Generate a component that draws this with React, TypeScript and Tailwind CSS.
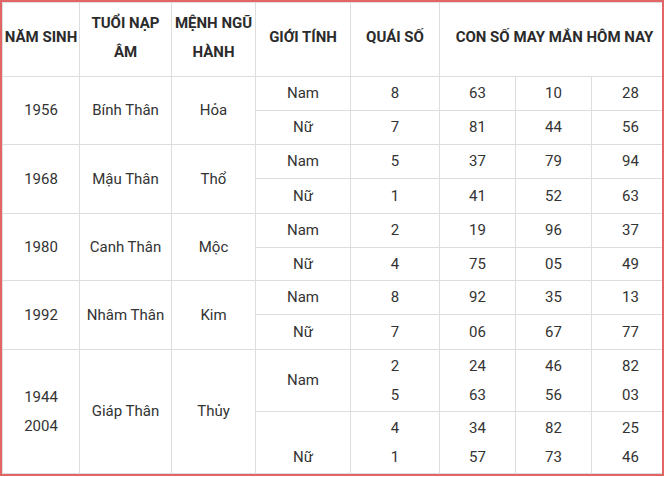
import React from "react";

type Group = {
  years: string[];
  tuoi: string;
  menh: string;
  rows: { gt: string[]; qs: string[]; nums: string[][] }[];
};

const groups: Group[] = [
  { years: ["1956"], tuoi: "Bính Thân", menh: "Hỏa", rows: [
    { gt: ["Nam"], qs: ["8"], nums: [["63"], ["10"], ["28"]] },
    { gt: ["Nữ"], qs: ["7"], nums: [["81"], ["44"], ["56"]] },
  ] },
  { years: ["1968"], tuoi: "Mậu Thân", menh: "Thổ", rows: [
    { gt: ["Nam"], qs: ["5"], nums: [["37"], ["79"], ["94"]] },
    { gt: ["Nữ"], qs: ["1"], nums: [["41"], ["52"], ["63"]] },
  ] },
  { years: ["1980"], tuoi: "Canh Thân", menh: "Mộc", rows: [
    { gt: ["Nam"], qs: ["2"], nums: [["19"], ["96"], ["37"]] },
    { gt: ["Nữ"], qs: ["4"], nums: [["75"], ["05"], ["49"]] },
  ] },
  { years: ["1992"], tuoi: "Nhâm Thân", menh: "Kim", rows: [
    { gt: ["Nam"], qs: ["8"], nums: [["92"], ["35"], ["13"]] },
    { gt: ["Nữ"], qs: ["7"], nums: [["06"], ["67"], ["77"]] },
  ] },
  { years: ["1944", "2004"], tuoi: "Giáp Thân", menh: "Thủy", rows: [
    { gt: ["Nam"], qs: ["2", "5"], nums: [["24", "63"], ["46", "56"], ["82", "03"]] },
    { gt: ["\u00a0", "Nữ"], qs: ["4", "1"], nums: [["34", "57"], ["82", "73"], ["25", "46"]] },
  ] },
];

const rowStarts = [2, 4, 6, 8, 10];
const rowStartClass: Record<number, string> = {
  2: "row-start-2",
  3: "row-start-3",
  4: "row-start-4",
  5: "row-start-5",
  6: "row-start-6",
  7: "row-start-7",
  8: "row-start-8",
  9: "row-start-9",
  10: "row-start-10",
  11: "row-start-11",
};

function Lines({ items }: { items: string[] }) {
  return (
    <>
      {items.map((t, i) => (
        <span key={i} className="block">
          {t}
        </span>
      ))}
    </>
  );
}

const cell = "bg-white flex flex-col items-center justify-center text-center";

export default function App() {
  return (
    <div className="w-[664px] h-[477px] bg-white">
      <div
        className="w-[664px] h-[476px] border-2 border-[#e26565] overflow-hidden"
        style={{ fontFamily: "Roboto, 'Liberation Sans', sans-serif" }}
      >
        <div className="w-[668px] shrink-0 grid grid-cols-[76px_91px_83px_94px_88px_75px_75px_77px] grid-rows-[73px_33px_33px_33px_34px_33px_32px_33px_34px_61px_61px] gap-px p-px bg-[#dddddd] text-[15px] text-[#333333] leading-[29px]">
          {/* header */}
          <div className={`${cell} font-bold text-[#2b2b2b] pb-[4px] col-start-1 row-start-1`}>NĂM SINH</div>
          <div className={`${cell} font-bold text-[#2b2b2b] pb-[4px] col-start-2 row-start-1`}>
            <span className="block">TUỔI NẠP</span>
            <span className="block">ÂM</span>
          </div>
          <div className={`${cell} font-bold text-[#2b2b2b] pb-[4px] col-start-3 row-start-1`}>
            <span className="block">MỆNH NGŨ</span>
            <span className="block">HÀNH</span>
          </div>
          <div className={`${cell} font-bold text-[#2b2b2b] pb-[4px] col-start-4 row-start-1`}>GIỚI TÍNH</div>
          <div className={`${cell} font-bold text-[#2b2b2b] pb-[4px] col-start-5 row-start-1`}>QUÁI SỐ</div>
          <div className={`${cell} font-bold text-[#2b2b2b] pb-[4px] col-start-6 col-span-3 row-start-1`}>CON SỐ MAY MẮN HÔM NAY</div>

          {groups.map((g, gi) => {
            const r = rowStarts[gi];
            return (
              <React.Fragment key={gi}>
                <div className={`${cell} col-start-1 row-span-2 ${rowStartClass[r]}`}>
                  <Lines items={g.years} />
                </div>
                <div className={`${cell} col-start-2 row-span-2 ${rowStartClass[r]}`}>{g.tuoi}</div>
                <div className={`${cell} col-start-3 row-span-2 ${rowStartClass[r]}`}>{g.menh}</div>
                {g.rows.map((row, ri) => {
                  const rs = rowStartClass[r + ri];
                  return (
                    <React.Fragment key={ri}>
                      <div className={`${cell} col-start-4 ${rs}`}>
                        <Lines items={row.gt} />
                      </div>
                      <div className={`${cell} col-start-5 ${rs}`}>
                        <Lines items={row.qs} />
                      </div>
                      <div className={`${cell} col-start-6 ${rs}`}>
                        <Lines items={row.nums[0]} />
                      </div>
                      <div className={`${cell} col-start-7 ${rs}`}>
                        <Lines items={row.nums[1]} />
                      </div>
                      <div className={`${cell} col-start-8 ${rs}`}>
                        <Lines items={row.nums[2]} />
                      </div>
                    </React.Fragment>
                  );
                })}
              </React.Fragment>
            );
          })}
        </div>
      </div>
    </div>
  );
}
